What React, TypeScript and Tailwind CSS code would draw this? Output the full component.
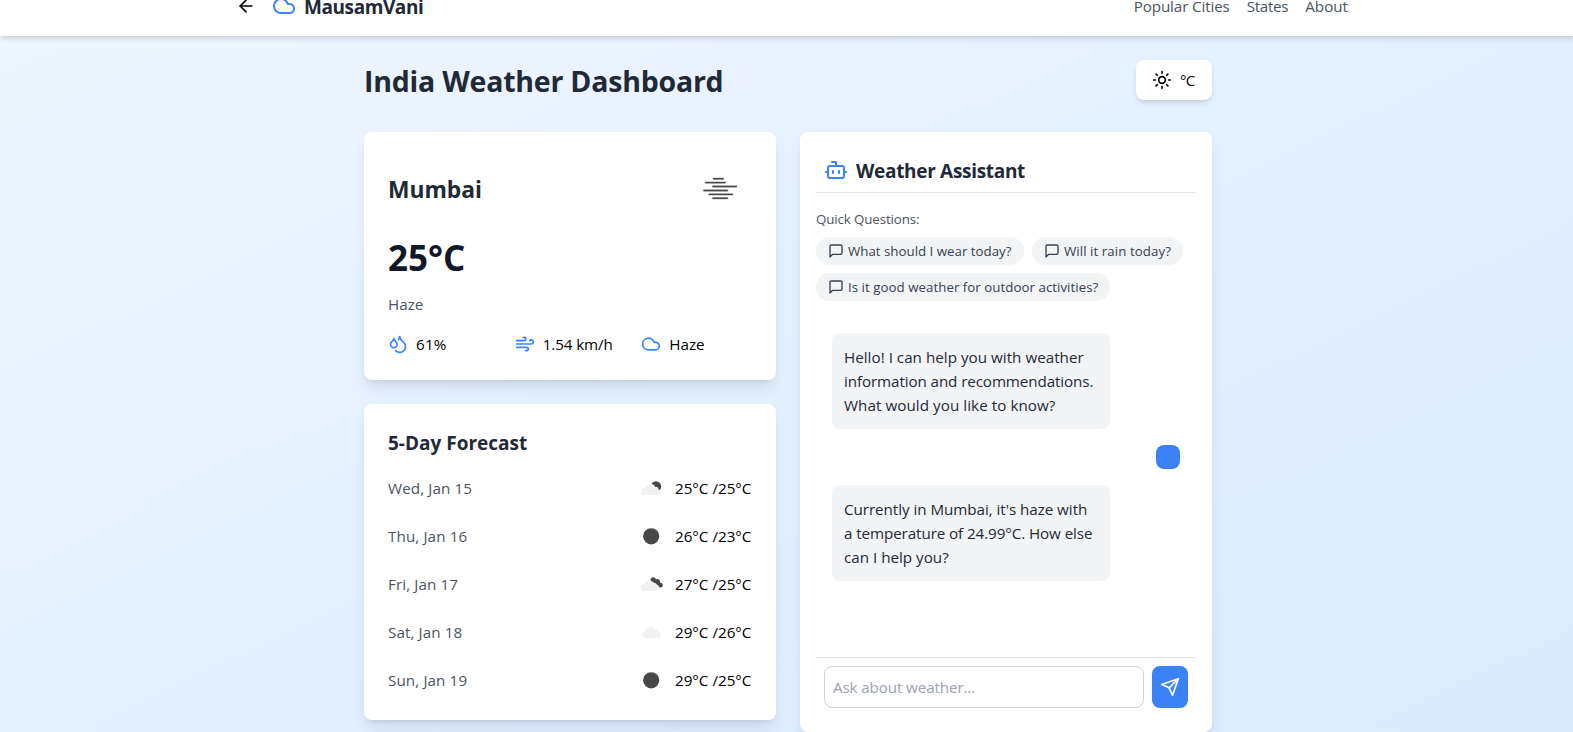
import React from 'react';
import { ArrowLeft, Bot, Cloud, Droplets, Sun, Wind } from 'lucide-react';

function Haze() {
  return (
    <svg viewBox="0 0 64 64" className="size-16" fill="none" strokeLinecap="round">
      <g stroke="#c9c9ca" strokeWidth="2.6">
        <path d="M25.7 22.7H35M17.7 26.6H37M25 30.5H48.3M16 34.5H39.3M21.3 38.4H44.3M25 42.3H39.3" />
      </g>
      <g stroke="#48484a" strokeWidth="1.4">
        <path d="M25.7 22.7H35M17.7 26.6H37M25 30.5H48.3M16 34.5H39.3M21.3 38.4H44.3M25 42.3H39.3" />
      </g>
    </svg>
  );
}

function ForecastIcon({ kind }: { kind: string }) {
  return (
    <svg viewBox="0 0 32 32" className="size-8">
      {kind === 'clear' && <circle cx="16.2" cy="16.3" r="8.1" fill="#48484a" />}
      {kind === 'few' && (
        <>
          <circle cx="21" cy="14.5" r="5.2" fill="#48484a" />
          <path d="M9 23h13.3a3 3 0 0 0 1.2-5.8a2.6 2.6 0 0 0-3.3-2.3a5.6 5.6 0 0 0-5-3.2a5.6 5.6 0 0 0-5 4.4A3.5 3.5 0 0 0 9 23Z" fill="#f2f2f2" />
        </>
      )}
      {kind === 'broken' && (
        <>
          <g fill="#48484a">
            <circle cx="18.2" cy="11.8" r="2.6" />
            <circle cx="22" cy="14.2" r="3.1" />
            <circle cx="25.4" cy="17.2" r="2.4" />
          </g>
          <path d="M8.4 23h12.6a3.3 3.3 0 0 0 .8-6.4a3.3 3.3 0 0 0-3.4-1.9a5 5 0 0 0-9 1.5A3.4 3.4 0 0 0 8.4 23Z" fill="#f2f2f2" />
        </>
      )}
      {kind === 'scattered' && (
        <path d="M9.3 22h13.1a3.1 3.1 0 0 0 .6-6.2a3.3 3.3 0 0 0-3.2-2.3a5.2 5.2 0 0 0-9.8 2.2A3.2 3.2 0 0 0 9.3 22Z" fill="#f2f2f2" />
      )}
    </svg>
  );
}

function MessageIcon() {
  return (
    <svg viewBox="0 0 24 24" className="size-4 shrink-0" fill="none" stroke="currentColor" strokeWidth="2" strokeLinecap="round" strokeLinejoin="round">
      <path d="M21 15a2 2 0 0 1-2 2H7l-4 4V5a2 2 0 0 1 2-2h14a2 2 0 0 1 2 2z" />
    </svg>
  );
}

function SendIcon() {
  return (
    <svg viewBox="0 0 24 24" className="size-5" fill="none" stroke="currentColor" strokeWidth="2" strokeLinecap="round" strokeLinejoin="round">
      <path d="m22 2-7 20-4-9-9-4Z" />
      <path d="M22 2 11 13" />
    </svg>
  );
}

const forecast = [
  { day: 'Wed, Jan 15', icon: 'few', temp: '25°C /25°C' },
  { day: 'Thu, Jan 16', icon: 'clear', temp: '26°C /23°C' },
  { day: 'Fri, Jan 17', icon: 'broken', temp: '27°C /25°C' },
  { day: 'Sat, Jan 18', icon: 'scattered', temp: '29°C /26°C' },
  { day: 'Sun, Jan 19', icon: 'clear', temp: '29°C /25°C' },
];

const questions = [
  { text: 'What should I wear today?', width: 'w-[208px]' },
  { text: 'Will it rain today?', width: 'w-[151px] tracking-[0.06px]' },
  { text: 'Is it good weather for outdoor activities?', width: 'w-[294px] tracking-[0.03px]' },
];

export default function App() {
  return (
    <div className="h-[732px] overflow-hidden font-['Open_Sans',sans-serif] text-[15.2px] leading-6 text-black">
      <div className="-mt-6 flex h-[756px] w-[1576px] flex-col bg-[linear-gradient(to_bottom_right,#eff6ff,#dbeafe)]">
        <header className="h-[60px] shrink-0 bg-white shadow-md">
          <div className="mx-auto flex h-full max-w-6xl items-center justify-between px-4">
            <div className="flex items-center gap-2">
              <button className="p-2">
                <ArrowLeft className="size-5" />
              </button>
              <div className="flex items-center gap-2">
                <Cloud className="size-6 text-[#3b82f6]" />
                <span className="pt-0.5 text-[19px] leading-7 font-bold tracking-[-0.42px] text-[#1f2937]">MausamVani</span>
              </div>
            </div>
            <nav className="flex gap-[17px] text-[#4b5563]">
              <a className="tracking-[-0.13px]">Popular Cities</a>
              <a className="tracking-[-0.3px]">States</a>
              <a>About</a>
            </nav>
          </div>
        </header>

        <main className="mx-auto w-full max-w-4xl p-6">
          <div className="mb-8 flex h-10 items-center justify-between">
            <h1 className="pt-0.5 text-[28.5px] leading-9 font-bold tracking-[-0.22px] text-[#1f2937]">India Weather Dashboard</h1>
            <button className="flex h-10 w-[76px] items-center gap-2 rounded-lg bg-white px-4 shadow-md">
              <Sun className="size-5" />
              <span className="tracking-[-0.7px]">°C</span>
            </button>
          </div>

          <div className="grid grid-cols-2 items-start gap-6">
            <div className="flex flex-col gap-6">
              <section className="h-[248px] rounded-lg bg-white p-6 shadow-lg">
                <div className="flex items-center justify-between">
                  <h2 className="pt-[3px] text-[22.8px] leading-8 font-bold text-[#1f2937]">Mumbai</h2>
                  <Haze />
                </div>
                <div className="mt-4 h-10 text-[35px] leading-[43px] font-bold text-[#111827]">25°C</div>
                <p className="mt-4 text-[#4b5563]">Haze</p>
                <div className="mt-4 grid grid-cols-3 gap-4">
                  <div className="flex items-center gap-2">
                    <Droplets className="size-5 text-[#3b82f6]" />
                    <span className="tracking-[0.2px]">61%</span>
                  </div>
                  <div className="flex items-center gap-2">
                    <Wind className="size-5 text-[#3b82f6]" />
                    <span className="tracking-[-0.1px]">1.54 km/h</span>
                  </div>
                  <div className="flex items-center gap-2">
                    <Cloud className="size-5 text-[#3b82f6]" />
                    <span>Haze</span>
                  </div>
                </div>
              </section>

              <section className="h-[316px] rounded-lg bg-white p-6 shadow-lg">
                <h3 className="mb-[15px] pt-px text-[19px] leading-7 font-bold text-[#1f2937]">5-Day Forecast</h3>
                <div className="flex flex-col gap-4">
                  {forecast.map((f) => (
                    <div key={f.day} className="flex h-8 items-center justify-between">
                      <span className="tracking-[0.11px] text-[#4b5563]">{f.day}</span>
                      <div className="flex items-center gap-2">
                        <ForecastIcon kind={f.icon} />
                        <span className="w-[77px] whitespace-nowrap">{f.temp}</span>
                      </div>
                    </div>
                  ))}
                </div>
              </section>
            </div>

            <section className="flex h-[600px] flex-col rounded-lg bg-white p-4 shadow-lg">
              <div className="flex h-[45px] items-center gap-2 border-b border-[#e5e7eb] px-2">
                <Bot className="size-6 text-[#3b82f6]" />
                <h3 className="pt-0.5 text-[19px] leading-7 font-bold tracking-[-0.31px] text-[#1f2937]">Weather Assistant</h3>
              </div>
              <div className="pt-4">
                <p className="mb-2 text-[13.3px] leading-5 tracking-[-0.1px] text-[#4b5563]">Quick Questions:</p>
                <div className="flex flex-wrap gap-2">
                  {questions.map((q) => (
                    <button
                      key={q.text}
                      className={`${q.width} flex h-7 items-center gap-1 rounded-full bg-[#f3f4f6] px-3 text-[13.3px] leading-5 whitespace-nowrap text-[#374151]`}
                    >
                      <MessageIcon />
                      {q.text}
                    </button>
                  ))}
                </div>
              </div>
              <div className="mt-4 flex flex-1 flex-col gap-4 p-4 text-[#1f2937]">
                <div className="w-[278px] rounded-lg bg-[#f3f4f6] p-3 whitespace-nowrap">
                  <p className="tracking-[0.02px]">Hello! I can help you with weather</p>
                  <p className="tracking-[-0.1px]">information and recommendations.</p>
                  <p className="tracking-[0.06px]">What would you like to know?</p>
                </div>
                <div className="size-6 self-end rounded-lg bg-[#3b82f6]" />
                <div className="w-[278px] rounded-lg bg-[#f3f4f6] p-3 whitespace-nowrap">
                  <p className="tracking-[-0.048px]">Currently in Mumbai, it's haze with</p>
                  <p className="tracking-[-0.086px]">a temperature of 24.99°C. How else</p>
                  <p>can I help you?</p>
                </div>
              </div>
              <div className="flex gap-2 border-t border-[#e5e7eb] p-2">
                <input
                  className="h-[42px] w-[320px] rounded-lg border border-[#d1d5db] p-2 tracking-[-0.12px] placeholder:text-[#9ca3af]"
                  placeholder="Ask about weather..."
                />
                <button className="flex w-9 items-center justify-center rounded-lg bg-[#3b82f6] text-white">
                  <SendIcon />
                </button>
              </div>
            </section>
          </div>
        </main>
      </div>
    </div>
  );
}
